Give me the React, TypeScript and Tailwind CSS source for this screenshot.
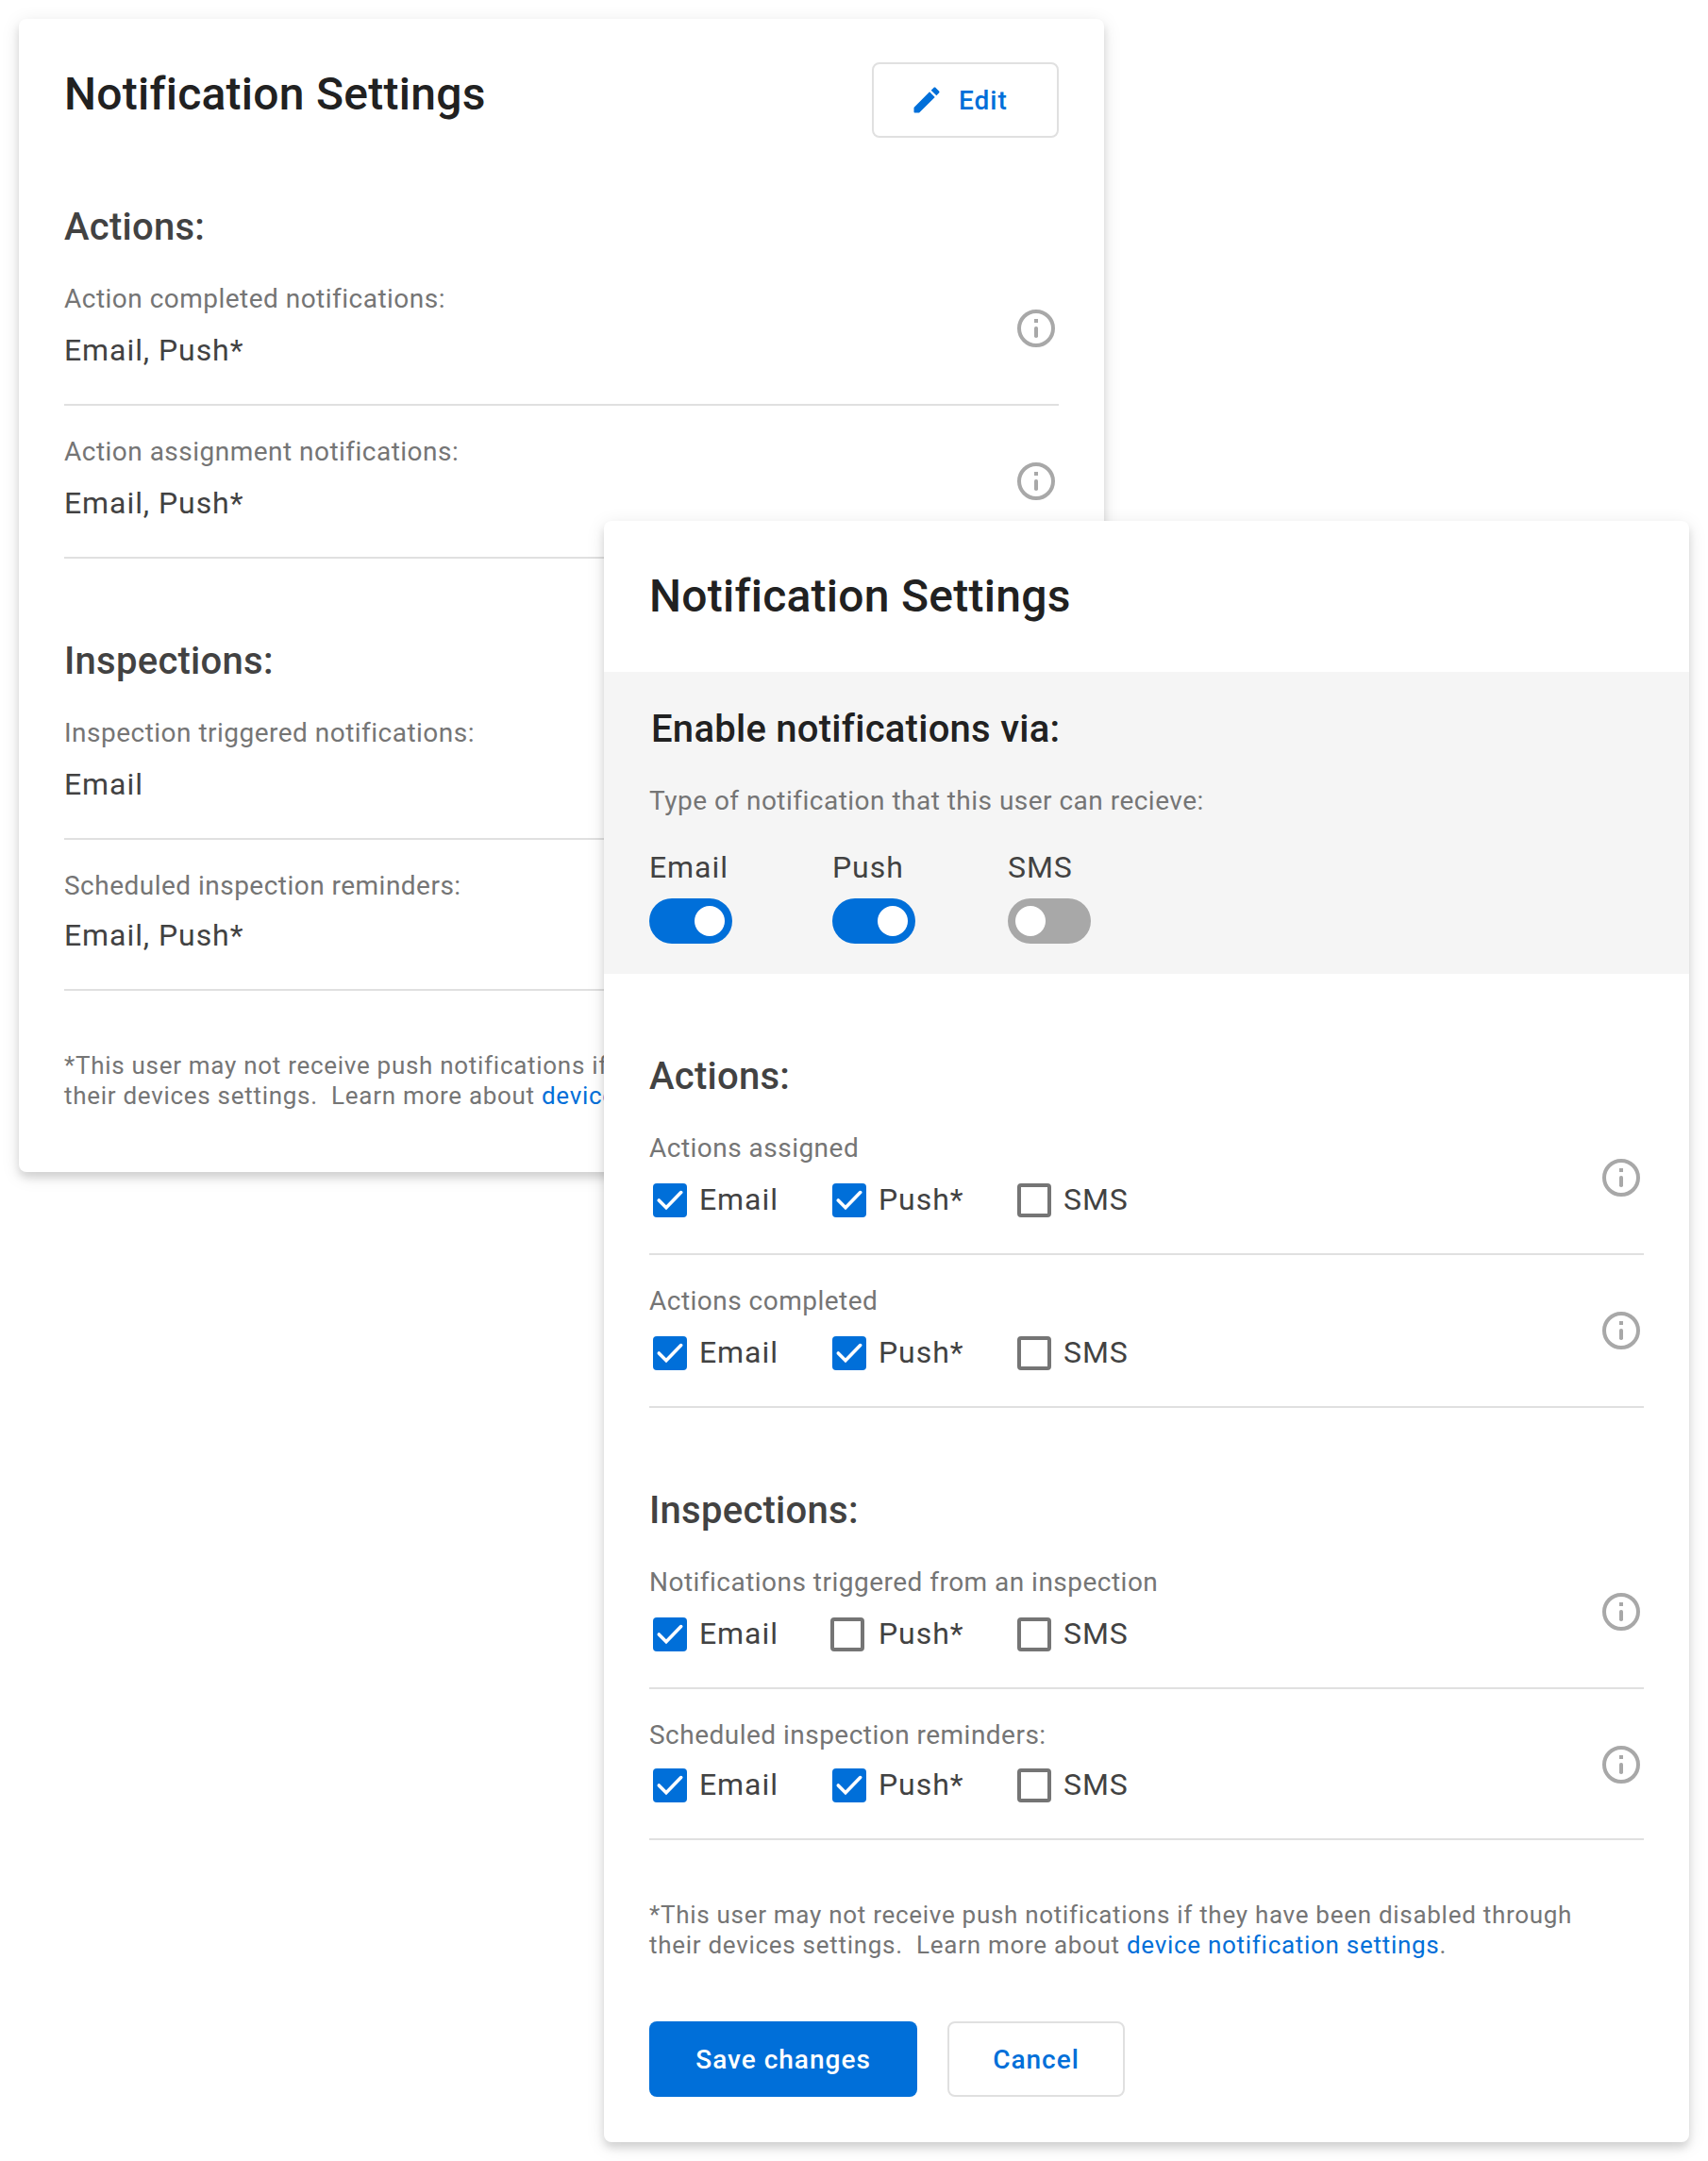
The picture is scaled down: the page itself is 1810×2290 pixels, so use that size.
import React from "react";

function InfoIcon() {
  return (
    <svg viewBox="0 0 24 24" className="mt-14 size-12 shrink-0" fill="none">
      <circle cx="12" cy="12" r="9" stroke="#a8a8a8" strokeWidth="2" />
      <rect x="11" y="7" width="2" height="2" fill="#a8a8a8" />
      <rect x="11" y="11" width="2" height="6" rx="0.9" fill="#a8a8a8" />
    </svg>
  );
}

function Row({ label, short, children }: { label: string; short?: boolean; children: React.ReactNode }) {
  return (
    <div className={`flex justify-between border-b-2 border-[#e0e0e0] ${short ? "h-40" : "h-[162px]"}`}>
      <div className={`flex flex-col pt-[29px] ${short ? "gap-2" : "gap-2.5"}`}>
        <div className="h-10 text-[28px] leading-10 tracking-[0.48px] whitespace-nowrap text-[#757575]">{label}</div>
        {children}
      </div>
      <InfoIcon />
    </div>
  );
}

function Value({ children }: { children: React.ReactNode }) {
  return <div className="h-12 text-[32px] leading-12 tracking-[0.93px] whitespace-nowrap text-[#424242]">{children}</div>;
}

function Check({ label, checked, width }: { label: string; checked: boolean; width: string }) {
  return (
    <div className={`flex items-start ${width}`}>
      {checked ? (
        <span className="mt-[7px] flex size-9 shrink-0 items-center justify-center rounded bg-[#006fd9]">
          <svg viewBox="0 0 36 36" className="size-9" fill="none">
            <path d="M6.3 18 L14 25.7 L29.7 9.6" stroke="white" strokeWidth="3.6" strokeLinecap="round" />
          </svg>
        </span>
      ) : (
        <span className="mt-[7px] size-9 shrink-0 rounded border-4 border-[#757575]" />
      )}
      <span className="ml-[13px] text-[32px] leading-12 tracking-[0.93px] text-[#424242]">{label}</span>
    </div>
  );
}

function Checks({ push = true }: { push?: boolean }) {
  return (
    <div className="flex h-12 pl-1">
      <Check label="Email" checked width="w-[188px]" />
      <div className={`flex w-[198px] ${push ? "pl-0.5" : "[&>div>span:last-child]:ml-[15px]"}`}>
        <Check label="Push*" checked={push} width="w-[190px]" />
      </div>
      <Check label="SMS" checked={false} width="w-[160px]" />
    </div>
  );
}

function Heading({ children }: { children: React.ReactNode }) {
  return <h2 className="h-12 text-[40px] leading-12 font-medium tracking-[0.26px] text-[#424242]">{children}</h2>;
}

function Footnote() {
  return (
    <p className="text-[26px] leading-8 tracking-[0.71px] whitespace-nowrap text-[#757575]">
      *This user may not receive push notifications if they have been disabled through
      <br />
      their devices settings.&nbsp; Learn more about <a className="text-[#006fd9]">device notification settings</a>.
    </p>
  );
}

function Toggle({ label, on, width }: { label: string; on: boolean; width: string }) {
  return (
    <div className={width}>
      <div className="h-12 text-[32px] leading-12 tracking-[0.93px] text-[#424242]">{label}</div>
      <div className={`mt-[9px] flex h-12 w-[88px] items-center rounded-full px-2 ${on ? "justify-end bg-[#006fd9]" : "bg-[#a8a8a8]"}`}>
        <span className="size-8 rounded-full bg-white" />
      </div>
    </div>
  );
}

const card =
  "w-[1150px] rounded-lg bg-white shadow-[0_4px_20px_rgba(0,0,0,0.10),0_6px_8px_rgba(0,0,0,0.12)]";

export default function App() {
  return (
    <div className="grid h-[2290px] w-[1810px] grid-cols-1 bg-white pt-5 pl-5 font-['Roboto',sans-serif]">
      <section className={`col-start-1 row-start-1 h-[1222px] px-12 pt-[46px] ${card}`}>
        <div className="flex h-20 justify-between">
          <h1 className="mt-[6px] h-14 text-[48px] leading-14 font-medium tracking-[0.25px] text-[#212121]">Notification Settings</h1>
          <button className="flex h-20 w-[198px] items-center gap-4 rounded-lg border-2 border-[#e0e0e0] pl-[38px] text-[28px] font-medium tracking-[1px] text-[#006fd9]">
            <svg viewBox="0 0 24 24" className="size-9" fill="currentColor">
              <path d="M3 17.46v3.04c0 .28.22.5.5.5h3.04c.13 0 .26-.05.35-.15L17.81 9.94l-3.75-3.75L3.15 17.1c-.1.1-.15.22-.15.36zM20.71 7.04c.39-.39.39-1.02 0-1.41l-2.34-2.34c-.39-.39-1.02-.39-1.41 0l-1.83 1.83 3.75 3.75 1.83-1.83z" />
            </svg>
            <span className="pt-0.5">Edit</span>
          </button>
        </div>
        <div className="mt-[71px]">
          <Heading>Actions:</Heading>
          <div className="mt-[3px]">
            <Row label="Action completed notifications:"><Value>Email, Push*</Value></Row>
            <Row label="Action assignment notifications:"><Value>Email, Push*</Value></Row>
          </div>
        </div>
        <div className="mt-[85px]">
          <Heading>Inspections:</Heading>
          <div className="mt-[3px]">
            <Row label="Inspection triggered notifications:"><Value>Email</Value></Row>
            <Row label="Scheduled inspection reminders:" short><Value>Email, Push*</Value></Row>
          </div>
        </div>
        <div className="mt-[63px]"><Footnote /></div>
      </section>

      <section className={`z-10 col-start-1 row-start-1 mt-[532px] ml-[620px] h-[1718px] ${card}`}>
        <div className="h-40 px-12 pt-[52px]">
          <h1 className="h-14 text-[48px] leading-14 font-medium tracking-[0.25px] text-[#212121]">Notification Settings</h1>
        </div>
        <div className="h-80 bg-[#f5f5f5] px-12 pt-[37px]">
          <h2 className="h-12 pl-[2px] text-[40px] leading-12 font-medium tracking-[0.26px] text-[#212121]">Enable notifications via:</h2>
          <div className="mt-8 h-10 text-[28px] leading-10 tracking-[0.48px] text-[#757575]">Type of notification that this user can recieve:</div>
          <div className="mt-[26px] flex">
            <Toggle label="Email" on width="w-[194px]" />
            <Toggle label="Push" on width="w-[186px]" />
            <Toggle label="SMS" on={false} width="w-[88px]" />
          </div>
        </div>
        <div className="px-12 pt-[85px]">
          <Heading>Actions:</Heading>
          <div className="mt-[3px]">
            <Row label="Actions assigned"><Checks /></Row>
            <Row label="Actions completed"><Checks /></Row>
          </div>
          <div className="mt-[85px]">
            <Heading>Inspections:</Heading>
          </div>
          <div className="mt-[3px]">
            <Row label="Notifications triggered from an inspection"><Checks push={false} /></Row>
            <Row label="Scheduled inspection reminders:" short><Checks /></Row>
          </div>
          <div className="mt-[63px]"><Footnote /></div>
          <div className="mt-[65px] flex gap-8 text-[28px] font-medium tracking-[1px]">
            <button className="flex h-20 w-[284px] items-center justify-center rounded-lg bg-[#006fd9] text-white">
              <span className="pt-0.5">Save changes</span>
            </button>
            <button className="flex h-20 w-[188px] items-center justify-center rounded-lg border-2 border-[#e0e0e0] text-[#006fd9]">
              <span className="pt-0.5">Cancel</span>
            </button>
          </div>
        </div>
      </section>
    </div>
  );
}
